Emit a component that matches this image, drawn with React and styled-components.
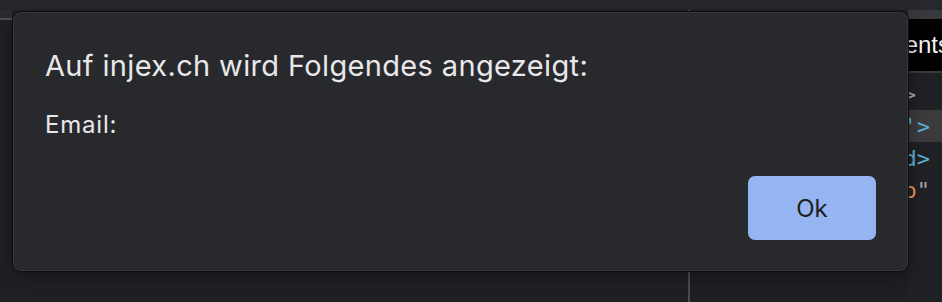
import React from 'react';
import styled, { createGlobalStyle } from 'styled-components';

const GlobalStyle = createGlobalStyle`
  html, body {
    margin: 0;
    padding: 0;
    background: #1f2023;
  }
  body {
    font-family: Inter, "Noto Sans", "Liberation Sans", sans-serif;
  }
`;

const App = () => {
  return (
    <Screen>
      <GlobalStyle />
      <TopBar />
      <Workspace>
        <LeftGutter>
          <GutterHead />
          <GutterLine />
        </LeftGutter>
        <MainArea>
          <PanePrimary />
          <PaneSecondary />
        </MainArea>
        <DevTools>
          <DevToolsStrip />
          <TabBar>
            <TabLabel>Elements</TabLabel>
          </TabBar>
          <CodeArea>
            <CodeLine $inset={26}><Punct>&gt;</Punct></CodeLine>
            <CodeLine $selected><Tag>'&gt;</Tag></CodeLine>
            <CodeLine><Tag>d&gt;</Tag></CodeLine>
            <CodeLine><Attr>o</Attr><Punct>"</Punct></CodeLine>
          </CodeArea>
        </DevTools>
      </Workspace>

      <Dialog role="alertdialog">
        <Title>Auf injex.ch wird Folgendes angezeigt:</Title>
        <Message>Email:</Message>
        <Actions>
          <OkButton>Ok</OkButton>
        </Actions>
      </Dialog>
    </Screen>
  );
};

const Screen = styled.div`
  position: relative;
  width: 942px;
  height: 302px;
  overflow: hidden;
  background: #1f2023;
  display: flex;
  flex-direction: column;
`;

const TopBar = styled.div`
  height: 10px;
  background: #27282b;
  flex-shrink: 0;
`;

const Workspace = styled.div`
  flex: 1;
  display: flex;
`;

const LeftGutter = styled.div`
  width: 12px;
  display: flex;
  flex-direction: column;
`;

const GutterHead = styled.div`
  height: 8px;
  background: #2b2c2f;
`;

const GutterLine = styled.div`
  height: 2px;
  background: #505154;
`;

const MainArea = styled.div`
  flex: 1;
  display: flex;
`;

const PanePrimary = styled.div`
  width: 676px;
  border-right: 2px solid #4a4b4e;
  background: #1f2023;
`;

const PaneSecondary = styled.div`
  flex: 1;
  background: #1e1f22;
`;

const DevTools = styled.div`
  width: 34px;
  display: flex;
  flex-direction: column;
  background: #202124;
`;

const DevToolsStrip = styled.div`
  height: 9px;
  background: #38393c;
`;

const TabBar = styled.div`
  height: 52px;
  background: #000;
  border-bottom: 2px solid #3a3a3c;
  display: flex;
  align-items: center;
  justify-content: flex-end;
  overflow: visible;
  white-space: nowrap;
`;

const TabLabel = styled.span`
  color: #f2f2f2;
  font-family: "Liberation Sans", Arial, sans-serif;
  font-size: 24px;
  margin-right: -8px;
`;

const CodeArea = styled.div`
  padding-top: 5px;
  display: flex;
  flex-direction: column;
`;

const CodeLine = styled.div`
  height: 32px;
  display: flex;
  align-items: center;
  justify-content: flex-end;
  padding-right: ${(p) => p.$inset ?? 12}px;
  font-family: "DejaVu Sans Mono", monospace;
  font-size: 22px;
  white-space: nowrap;
  background: ${(p) => (p.$selected ? '#3b3b3d' : 'transparent')};
`;

const Punct = styled.span`
  color: #a8a8a8;
`;

const Tag = styled.span`
  color: #5db0d7;
`;

const Attr = styled.span`
  color: #e3925c;
`;

const Dialog = styled.div`
  position: absolute;
  left: 12px;
  top: 11px;
  width: 897px;
  height: 261px;
  box-sizing: border-box;
  background: #28292d;
  border: 1px solid #0e0e10;
  border-radius: 9px;
  box-shadow: inset 0 0 0 1px #37383c, 0 4px 16px rgba(0, 0, 0, 0.35);
  padding: 34px 32px 31px 32px;
  display: flex;
  flex-direction: column;
`;

const Title = styled.div`
  color: #e8e8ea;
  font-size: 29px;
  line-height: 40px;
  letter-spacing: 0.35px;
`;

const Message = styled.div`
  color: #e8e8ea;
  font-size: 24px;
  line-height: 30px;
  letter-spacing: 0.8px;
  margin-top: 24px;
`;

const Actions = styled.div`
  margin-top: auto;
  display: flex;
  justify-content: flex-end;
`;

const OkButton = styled.button`
  width: 128px;
  height: 64px;
  border: none;
  border-radius: 7px;
  background: #94b4f2;
  color: #1c1d20;
  font-family: Inter, "Noto Sans", sans-serif;
  font-size: 24px;
  cursor: pointer;
`;

export default App;
